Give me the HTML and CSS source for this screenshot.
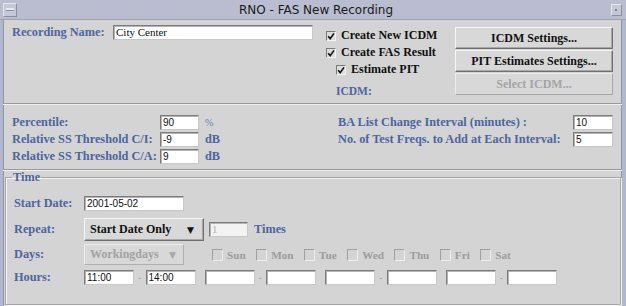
FILE: index.html
```html
<!DOCTYPE html>
<html>
<head>
<meta charset="utf-8">
<link rel="stylesheet" href="styles.css">
</head>
<body>
<div class="window">
  <div class="titlebar">
    <span class="tb-btn tb-min"><span class="tb-dash"></span></span>
    <span class="title">RNO - FAS New Recording</span>
    <span class="tb-btn tb-max"><span class="tb-dot"></span></span>
  </div>
  <div class="frame">
    <div class="top">
      <div class="name-row">
        <span class="lbl name-lbl">Recording Name:</span>
        <span class="field name-field">City Center</span>
      </div>
      <div class="checks">
        <div class="check"><span class="cb"><svg viewBox="0 0 8 8" width="8" height="8"><path d="M1.2 4.2 L3.2 6.6 L7 1.4" fill="none" stroke="#111" stroke-width="1.6"/></svg></span>Create New ICDM</div>
        <div class="check"><span class="cb"><svg viewBox="0 0 8 8" width="8" height="8"><path d="M1.2 4.2 L3.2 6.6 L7 1.4" fill="none" stroke="#111" stroke-width="1.6"/></svg></span>Create FAS Result</div>
        <div class="check indent"><span class="cb"><svg viewBox="0 0 8 8" width="8" height="8"><path d="M1.2 4.2 L3.2 6.6 L7 1.4" fill="none" stroke="#111" stroke-width="1.6"/></svg></span>Estimate PIT</div>
        <div class="lbl icdm">ICDM:</div>
      </div>
      <div class="buttons">
        <div class="btn">ICDM Settings...</div>
        <div class="btn">PIT Estimates Settings...</div>
        <div class="btn disabled">Select ICDM...</div>
      </div>
    </div>
    <div class="sep"></div>
    <div class="params">
      <div class="pgrid pleft">
        <span class="lbl">Percentile:</span><span class="field num">90</span><span class="unit pct">%</span>
        <span class="lbl">Relative SS Threshold C/I:</span><span class="field num">-9</span><span class="unit lbl">dB</span>
        <span class="lbl">Relative SS Threshold C/A:</span><span class="field num">9</span><span class="unit lbl">dB</span>
      </div>
      <div class="pgrid pright">
        <span class="lbl">BA List Change Interval (minutes) :</span><span class="field num">10</span>
        <span class="lbl">No. of Test Freqs. to Add at Each Interval:</span><span class="field num">5</span>
      </div>
    </div>
    <div class="sep sep2"></div>
    <fieldset class="time">
      <legend class="lbl">Time</legend>
      <div class="row r-start">
        <span class="lbl tlbl">Start Date:</span>
        <span class="field num date">2001-05-02</span>
      </div>
      <div class="row r-repeat">
        <span class="lbl tlbl">Repeat:</span>
        <span class="combo">Start Date Only<span class="arrow">&#9660;</span></span>
        <span class="field times dis">1</span>
        <span class="lbl">Times</span>
      </div>
      <div class="row r-days">
        <span class="lbl tlbl">Days:</span>
        <span class="combo combo-dis">Workingdays<span class="arrow">&#9660;</span></span>
        <div class="days">
          <span class="day"><span class="dbox"></span>Sun</span>
          <span class="day"><span class="dbox"></span>Mon</span>
          <span class="day"><span class="dbox"></span>Tue</span>
          <span class="day"><span class="dbox"></span>Wed</span>
          <span class="day"><span class="dbox"></span>Thu</span>
          <span class="day"><span class="dbox"></span>Fri</span>
          <span class="day"><span class="dbox"></span>Sat</span>
        </div>
      </div>
      <div class="row r-hours">
        <span class="lbl tlbl">Hours:</span>
        <div class="hours">
          <span class="pair"><span class="field num hr">11:00</span><span class="dash">-</span><span class="field num hr">14:00</span></span>
          <span class="pair"><span class="field num hr"></span><span class="dash">-</span><span class="field num hr"></span></span>
          <span class="pair"><span class="field num hr"></span><span class="dash">-</span><span class="field num hr"></span></span>
          <span class="pair"><span class="field num hr"></span><span class="dash">-</span><span class="field num hr"></span></span>
        </div>
      </div>
    </fieldset>
  </div>
</div>
</body>
</html>
```
FILE: styles.css
```css
html, body {
  margin: 0;
  padding: 0;
}
body {
  width: 626px;
  height: 306px;
  overflow: hidden;
  background: #d4d4d4;
  font-family: "Liberation Serif", serif;
}
.window {
  width: 626px;
  height: 306px;
  background: #d4d4d4;
}
.titlebar {
  height: 19px;
  background: #b9bdcf;
  border-bottom: 1px solid #9da2b6;
  display: flex;
  align-items: center;
  justify-content: space-between;
  box-sizing: content-box;
}
.tb-btn {
  display: flex;
  align-items: center;
  justify-content: center;
  box-sizing: border-box;
  background: #c3c7d6;
  border: 1px solid;
  border-color: #e6e8f0 #8a8fa3 #8a8fa3 #e6e8f0;
}
.tb-min {
  width: 14px;
  height: 14px;
  margin-left: 3px;
}
.tb-dash {
  width: 8px;
  height: 2px;
  background: #e8eaf2;
  border-bottom: 1px solid #8a8fa3;
}
.tb-max {
  width: 11px;
  height: 12px;
  margin-right: 4px;
}
.tb-dot {
  width: 2px;
  height: 2px;
  background: #777c90;
}
.title {
  font-family: "DejaVu Sans", sans-serif;
  font-size: 12px;
  color: #1a1a1a;
  margin-left: 4px;
}
.frame {
  height: 286px;
  border-left: 3px solid #b2b8cc;
  border-right: 4px solid #b2b8cc;
  box-shadow: inset 1px 0 0 #8f95aa, inset -1px 0 0 #8f95aa;
}
.lbl {
  font-family: "Liberation Serif", serif;
  font-weight: bold;
  font-size: 12.3px;
  color: #4d65a0;
  line-height: 15px;
  white-space: nowrap;
}
.field {
  box-sizing: border-box;
  display: block;
  height: 15px;
  background: #ffffff;
  border: 1px solid;
  border-color: #7c7c7c #c8c8c8 #c8c8c8 #7c7c7c;
  box-shadow: inset 1px 1px 0 #b4b4b4;
  font-size: 11px;
  line-height: 13px;
  padding-left: 2px;
  color: #111;
  white-space: nowrap;
  overflow: hidden;
}
.num {
  font-family: "Liberation Sans", sans-serif;
  font-size: 10px;
}
/* top section */
.top {
  display: flex;
  height: 83px;
}
.name-row {
  width: 323px;
  display: flex;
  align-items: flex-start;
  padding: 5px 0 0 9px;
  box-sizing: border-box;
}
.name-lbl {
  width: 101px;
  flex: none;
}
.name-field {
  width: 200px;
  font-family: "Liberation Serif", serif;
}
.checks {
  width: 129px;
  padding-top: 7px;
  box-sizing: border-box;
}
.check {
  display: flex;
  align-items: center;
  height: 17px;
  font-weight: bold;
  font-size: 12px;
  color: #111;
}
.check.indent {
  padding-left: 10px;
}
.cb {
  box-sizing: border-box;
  width: 10px;
  height: 10px;
  margin-right: 5px;
  display: flex;
  align-items: center;
  justify-content: center;
  background: #dcdcdc;
  border: 1px solid;
  border-color: #7a7a7a #f4f4f4 #f4f4f4 #7a7a7a;
}
.icdm {
  margin: 6px 0 0 10px;
  font-size: 11.5px;
}
.buttons {
  width: 158px;
  padding-top: 7px;
  display: flex;
  flex-direction: column;
  gap: 1px;
}
.btn {
  height: 22px;
  box-sizing: border-box;
  display: flex;
  align-items: center;
  justify-content: center;
  background: #d8d8d8;
  border: 1px solid;
  border-color: #f6f6f6 #6f6f6f #6f6f6f #f6f6f6;
  box-shadow: inset -1px -1px 0 #a8a8a8;
  font-weight: bold;
  font-size: 12px;
  color: #111;
}
.btn.disabled {
  color: #a4a4a4;
  border-color: #ececec #a8a8a8 #a8a8a8 #ececec;
  box-shadow: none;
}
.sep {
  height: 0;
  border-top: 1px solid #9a9a9a;
  border-bottom: 1px solid #efefef;
}
/* params */
.params {
  display: flex;
  height: 64px;
  padding: 10px 0 0 9px;
  box-sizing: border-box;
}
.pgrid {
  display: grid;
  row-gap: 2px;
  grid-auto-rows: 15px;
  align-items: center;
}
.pleft {
  grid-template-columns: 148px 39px auto;
  width: 326px;
}
.pright {
  grid-template-columns: 235px 40px;
}
.unit {
  padding-left: 6px;
}
.pct {
  font-family: "Liberation Serif", serif;
  font-size: 10px;
  color: #6b80b0;
}
/* time */
.time {
  margin: 0 1px 0 2px;
  padding: 12px 0 0 8px;
  border: 1px solid #a6a6a6;
  box-shadow: 1px 1px 0 #f2f2f2, inset 1px 1px 0 #f2f2f2;
  height: 134px;
  box-sizing: border-box;
}
.time legend {
  margin-left: -2px;
  padding: 0 1px;
  line-height: 13px;
}
.row {
  display: flex;
  align-items: center;
}
.tlbl {
  width: 70px;
  flex: none;
}
.r-start { height: 15px; }
.r-repeat { height: 23px; margin-top: 7px; }
.r-days { height: 21px; margin-top: 3px; }
.r-hours { height: 15px; margin-top: 5px; }
.date {
  width: 100px;
}
.combo {
  box-sizing: border-box;
  width: 120px;
  height: 23px;
  display: flex;
  align-items: center;
  justify-content: space-between;
  padding: 0 9px 0 5px;
  background: #d8d8d8;
  border: 1px solid;
  border-color: #f6f6f6 #6f6f6f #6f6f6f #f6f6f6;
  box-shadow: inset -1px -1px 0 #a8a8a8;
  font-weight: bold;
  font-size: 12px;
  color: #111;
}
.arrow {
  font-size: 9px;
  font-family: "DejaVu Sans", sans-serif;
}
.combo-dis {
  width: 100px;
  height: 21px;
  color: #a2a2a2;
  border-color: #ececec #b0b0b0 #b0b0b0 #ececec;
  box-shadow: none;
  padding-right: 7px;
}
.combo-dis .arrow {
  color: #a8a8a8;
}
.times {
  width: 39px;
  margin: 0 6px 0 5px;
  background: #f3f3f3;
  color: #b0b0b0;
  font-family: "Liberation Serif", serif;
}
.days {
  display: flex;
  margin-left: 28px;
  gap: 10.5px;
}
.day {
  display: flex;
  align-items: center;
  font-weight: bold;
  font-size: 11.2px;
  color: #9c9c9c;
}
.dbox {
  box-sizing: border-box;
  width: 11px;
  height: 12px;
  margin-right: 4px;
  border: 1px solid;
  border-color: #a0a0a0 #eeeeee #eeeeee #a0a0a0;
}
.hours {
  display: flex;
  gap: 9px;
}
.pair {
  display: flex;
  align-items: center;
}
.hr {
  width: 50px;
}
.dash {
  width: 11.5px;
  text-align: center;
  font-family: "Liberation Sans", sans-serif;
  font-size: 9px;
  color: #9a9a9a;
}
```
